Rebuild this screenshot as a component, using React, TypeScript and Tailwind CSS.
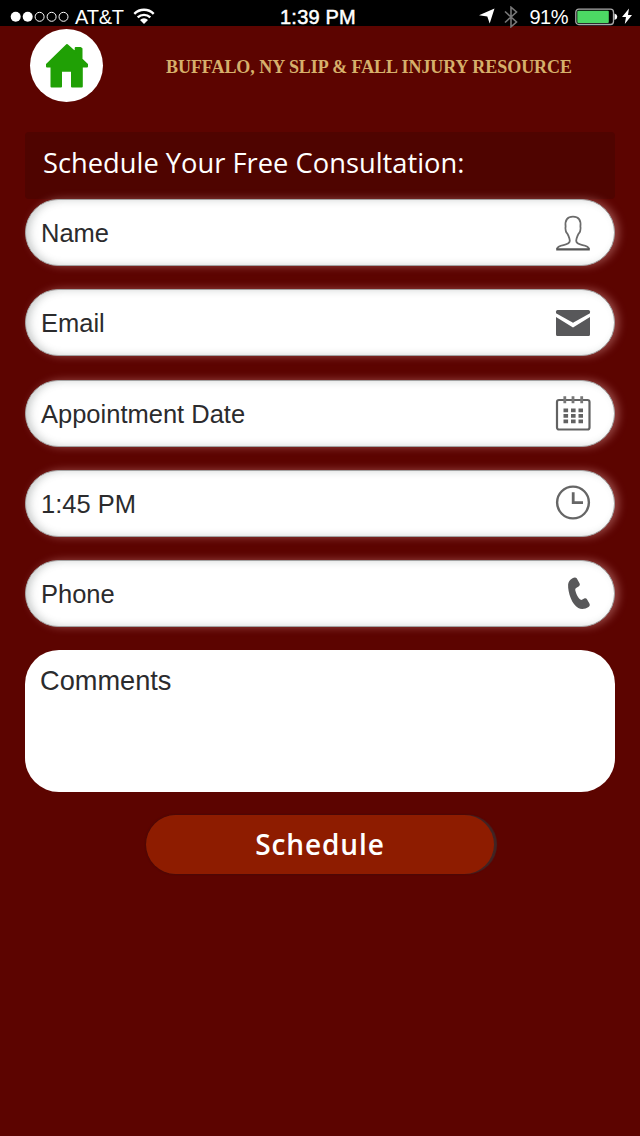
import type { ReactNode } from "react";

function UserIcon() {
  return (
    <svg width="36" height="36" viewBox="0 0 36 36" fill="none" stroke="#6b6b6b" strokeWidth="1.8">
      <path d="M2 34c.4-2.400 3-3.200 6.500-3.900 4.200-.8 6.300-1.600 6.300-4.300 0-2.400-1-4-2-6.500-.4-1-1.500-1.200-2-3.300-.5-2-.7-3-.2-4.500C9.800 5 12.500 1.700 18 1.700s8.200 3.300 7.400 9.800c.5 1.500.3 2.500-.2 4.500-.5 2.100-1.600 2.300-2 3.300-1 2.500-2 4.100-2 6.500 0 2.700 2.100 3.500 6.300 4.300 3.500.7 6.100 1.500 6.500 3.900" />
      <path d="M1.200 34.300h33.600" strokeWidth="2.200" stroke="#555" />
    </svg>
  );
}

function MailIcon() {
  return (
    <svg width="36" height="36" viewBox="0 0 36 36" fill="#58585a">
      <path d="M2.500 5h31q1.500 0 1.500 1.500v1.800L18 17.800 1 8.300V6.500Q1 5 2.500 5z" />
      <path d="M1 12 18 22.500 35 12v17.500q0 1.500-1.500 1.500h-31Q1 31 1 29.500z" />
    </svg>
  );
}

function CalendarIcon() {
  return (
    <svg width="36" height="36" viewBox="0 0 36 36" fill="none" stroke="#626262">
      <rect x="2" y="5" width="32.500" height="29.500" rx="2" strokeWidth="2.200" />
      <path d="M9.800 1.300v7M18 1.300v7M26.700 1.300v7" strokeWidth="2.800" stroke="#777" />
      <path
        d="M8.500 15.300h19.500M8.500 20.800h19.500M8.500 26.300h19.500"
        strokeWidth="3.800"
        strokeDasharray="4.600 2.900"
      />
    </svg>
  );
}

function ClockIcon() {
  return (
    <svg width="36" height="36" viewBox="0 0 36 36" fill="none" stroke="#666">
      <circle cx="18" cy="17.500" r="15.900" strokeWidth="2.400" />
      <path d="M18.200 7.300v10.400H28" strokeWidth="2.800" />
    </svg>
  );
}

function PhoneIcon() {
  return (
    <svg width="36" height="36" viewBox="0 0 36 36" fill="#58585a">
      <path d="M17.500 2.200c1.500-.8 3.500-.9 4.200.1l2.800 4.900c.7 1.300.3 2.300-.9 3.200l-2.500 1.700c-.9.700-1 1.600-.7 2.700.7 3.200 2.200 6 4.200 8.300.9.900 1.800 1 2.800.5l1.800-1c1.200-.6 2.200-.3 2.900.8l2.300 4.200c.7 1.400.4 2.500-.9 3.300-2.900 2.100-7.200 2.700-10.200 1-3.300-1.900-5.700-5.200-7.500-9.700-1.900-4.500-2.900-9.700-2.700-13.600.2-2.800 1.700-5.100 4.400-6.400z" />
    </svg>
  );
}

function HomeIcon() {
  return (
    <svg width="44" height="46" viewBox="0 0 44 46" fill="#20a005" stroke="#20a005" strokeWidth="2" strokeLinejoin="round">
      <path d="M22 2 2 21.500v2h4.500v20H16V27.700h11v15.800h9.800v-20H42v-2l-5.500-5.300V5.700l-1-.7h-4.800v4.800z" />
    </svg>
  );
}

function StatusBar() {
  return (
    <div className="h-[26px] bg-black text-white flex items-center font-['Liberation_Sans',Arial,sans-serif] text-[20px] leading-[26px]">
      <div className="w-[213px] pl-[10px] flex items-center">
        <svg width="60" height="12" viewBox="0 0 60 12" className="mt-[7px]">
          <circle cx="5.700" cy="5.800" r="5" fill="#fff" />
          <circle cx="17.700" cy="5.800" r="5" fill="#fff" />
          <g fill="none" stroke="#fff">
            <circle cx="29.600" cy="5.800" r="4.500" />
            <circle cx="41.600" cy="5.800" r="4.500" />
            <circle cx="53.500" cy="5.800" r="4.500" />
          </g>
        </svg>
        <span className="ml-[5px] mt-[7px] tracking-[-0.2px]">AT&amp;T</span>
        <svg width="22" height="16" viewBox="0 0 22 16" fill="none" stroke="#fff" strokeWidth="2.400" className="ml-[9px] mt-[5px]">
          <path d="M1.300 5.800a13.700 13.700 0 0 1 19.400 0M4.700 9.400a9 9 0 0 1 12.600 0" />
          <path d="M7 12a5.700 5.700 0 0 1 8 0l-4 4z" fill="#fff" stroke="none" />
        </svg>
      </div>
      <div className="flex-1 text-center mt-[7px] pr-[4px] tracking-[0.2px] font-medium [-webkit-text-stroke:0.5px_white]">1:39 PM</div>
      <div className="w-[213px] pr-[8px] flex items-center justify-end">
        <svg width="16" height="16" viewBox="0 0 16 16" fill="#fff" className="mt-[6px]">
          <path d="M15.500.5 10.700 15.500 8.300 8.500 0 7.200z" />
        </svg>
        <svg width="14" height="22" viewBox="0 0 14 22" fill="none" stroke="#777" strokeWidth="1.600" className="ml-[9px] mt-[7px]">
          <path d="M1 5.500 12.500 16 7 20.800V1.200L12.500 6 1 16.500" />
        </svg>
        <span className="ml-[11px] mt-[7px] tracking-[-0.5px]">91%</span>
        <svg width="43" height="18" viewBox="0 0 43 18" className="ml-[7px] mt-[7px]">
          <rect x=".8" y="1.200" width="37.700" height="15.300" rx="3" fill="none" stroke="#aaa" strokeWidth="1.300" />
          <rect x="2.300" y="2.700" width="31.500" height="12.300" rx="1" fill="#4cd964" />
          <path d="M39.500 5.500q2.800 1 2.800 3.300t-2.800 3.300z" fill="#fff" />
        </svg>
        <svg width="10" height="17" viewBox="0 0 10 17" fill="#fff" className="ml-[4px] mt-[6px]">
          <path d="M7 .5 0 9h4L2.800 16 10 7H6z" />
        </svg>
      </div>
    </div>
  );
}

function Field({ label, icon }: { label: string; icon: ReactNode }) {
  return (
    <div className="h-[67px] rounded-full bg-white border border-[#a3a3a3] pl-[15px] pr-[23px] flex items-center justify-between shadow-[inset_4px_0_8px_-1px_rgba(80,90,90,0.32),4px_0_8px_rgba(255,190,190,0.36)]">
      <span className="text-[25.5px] leading-[30px] mt-[1px]">{label}</span>
      {icon}
    </div>
  );
}

export default function App() {
  const fields = [
    { label: "Name", icon: <UserIcon /> },
    { label: "Email", icon: <MailIcon /> },
    { label: "Appointment Date", icon: <CalendarIcon /> },
    { label: "1:45 PM", icon: <ClockIcon /> },
    { label: "Phone", icon: <PhoneIcon /> },
  ];

  return (
    <div className="w-[640px] h-[1136px] overflow-hidden bg-[#5c0400] font-['Liberation_Sans',Arial,sans-serif] text-[#2b2b2d]">
      <StatusBar />

      {/* Header */}
      <header className="h-[106px] pl-[30px] pt-[3px] flex items-start">
        <button className="w-[73px] h-[73px] rounded-full bg-white flex items-center justify-center">
          <HomeIcon />
        </button>
        <h1 className="ml-[63px] mt-[26px] whitespace-nowrap font-['Liberation_Serif','Times_New_Roman',serif] font-bold text-[18px] leading-[24px] tracking-[-0.05px] text-[#d6b06b]">
          BUFFALO, NY SLIP &amp; FALL INJURY RESOURCE
        </h1>
      </header>

      {/* Consultation form */}
      <main className="px-[25px]">
        <h2 className="h-[67px] pl-[18px] pt-[12px] rounded bg-[#4f0400] text-white font-['Open_Sans',sans-serif] text-[27.3px] leading-[38px] whitespace-nowrap">
          Schedule Your Free Consultation:
        </h2>
        <div className="flex flex-col gap-[23.3px]">
          {fields.map((field) => (
            <Field key={field.label} label={field.label} icon={field.icon} />
          ))}
        </div>
        <div className="mt-[22.8px] h-[142px] rounded-[34px] bg-white pl-[15px] pt-[16px] text-[27.200px] leading-[30px]">
          Comments
        </div>
        <button className="block mt-[23px] ml-[121px] w-[348px] h-[59px] rounded-full bg-[#8e1c00] text-center text-white font-['Open_Sans',sans-serif] font-semibold text-[28px] leading-[56px] tracking-[0.9px] shadow-[3px_0_1px_#402525,0_0_2px_#301010]">
          Schedule
        </button>
      </main>
    </div>
  );
}
